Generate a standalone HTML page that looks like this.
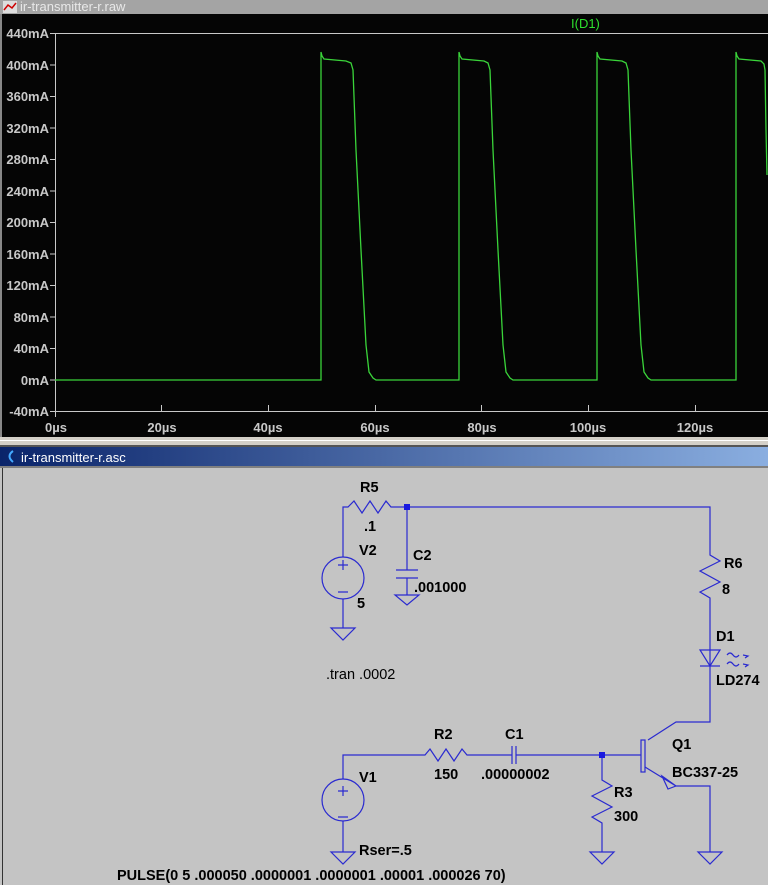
<!DOCTYPE html>
<html><head><meta charset="utf-8"><style>
html,body{margin:0;padding:0;width:768px;height:885px;overflow:hidden;background:#c4c4c4}
svg{display:block}
.ax{font-family:"Liberation Sans",sans-serif;font-size:13px;fill:#c8c8c8;font-weight:bold}
.t{font-family:"Liberation Sans",sans-serif;font-size:14.5px;fill:#000;font-weight:bold}
</style></head><body>
<svg width="768" height="885" viewBox="0 0 768 885" xmlns="http://www.w3.org/2000/svg">
<rect x="0" y="0" width="768" height="14" fill="#a4a4a4"/>
<rect x="3" y="1" width="14" height="12" fill="#ddd"/>
<path d="M4 10 L8 5 L12 8 L16 3" stroke="#c00" stroke-width="1.5" fill="none"/>
<text x="20" y="11" font-family="Liberation Sans,sans-serif" font-size="13" fill="#e8e8e8">ir-transmitter-r.raw</text>
<rect x="0" y="14" width="768" height="423" fill="#050505"/>
<rect x="0" y="14" width="2" height="423" fill="#888"/>
<g stroke="#c8c8c8" stroke-width="1" fill="none">
<line x1="50" y1="33.5" x2="768" y2="33.5"/>
<line x1="55.5" y1="33" x2="55.5" y2="411"/>
<line x1="55" y1="411.5" x2="768" y2="411.5"/>
<path d="M50 65h5M50 96.5h5M50 128h5M50 159.5h5M50 191h5M50 222.5h5M50 254h5M50 285.5h5M50 317h5M50 348.5h5M50 380h5M50 411.5h5"/>
<path d="M55.5 411v6M161.5 405v6M268.5 405v6M375.5 405v6M481.5 405v6M588.5 405v6M695.5 405v6"/>
</g>
<g class="ax" text-anchor="end">
<text x="49" y="38">440mA</text><text x="49" y="70">400mA</text><text x="49" y="101">360mA</text>
<text x="49" y="133">320mA</text><text x="49" y="164">280mA</text><text x="49" y="196">240mA</text>
<text x="49" y="227">200mA</text><text x="49" y="259">160mA</text><text x="49" y="290">120mA</text>
<text x="49" y="322">80mA</text><text x="49" y="353">40mA</text><text x="49" y="385">0mA</text>
<text x="49" y="416">-40mA</text>
</g>
<g class="ax" text-anchor="middle">
<text x="56" y="432">0µs</text><text x="162" y="432">20µs</text><text x="268" y="432">40µs</text>
<text x="375" y="432">60µs</text><text x="482" y="432">80µs</text><text x="588" y="432">100µs</text><text x="695" y="432">120µs</text>
</g>
<text x="571" y="28" font-family="Liberation Sans,sans-serif" font-size="13" fill="#2ee02e">I(D1)</text>
<path fill="none" stroke="#3ad43a" stroke-width="1.3" d="
M55 380 L321 380 L321 52 L322 56 L324 59 L346 61 L351 63 L353 70 L356 150 L361 250 L366 345 L369 372 L373 378 L376 380
L459 380 L459 52 L460 56 L462 59 L484 61 L488 63 L490 70 L493 150 L498 250 L503 345 L506 372 L510 378 L513 380
L597 380 L597 52 L598 56 L600 59 L622 61 L626 63 L628 70 L631 150 L636 250 L641 345 L644 372 L648 378 L651 380
L736 380 L736 52 L737 56 L739 59 L761 61 L764 64 L765 70 L766 130 L767 175"/>
<rect x="0" y="437" width="768" height="11" fill="#d4d0c8"/>
<rect x="0" y="440" width="768" height="1" fill="#fff"/>
<rect x="0" y="445" width="768" height="2" fill="#555"/>
<defs><linearGradient id="g" x1="0" x2="1"><stop offset="0" stop-color="#0a246a"/><stop offset="1" stop-color="#8aaee0"/></linearGradient></defs>
<rect x="0" y="447" width="768" height="19" fill="url(#g)"/>
<path d="M13 451 Q6 456 13 462" stroke="#4af" stroke-width="2" fill="none"/>
<text x="21" y="462" font-family="Liberation Sans,sans-serif" font-size="13" fill="#fff">ir-transmitter-r.asc</text>
<rect x="0" y="466" width="768" height="2" fill="#808080"/>
<rect x="2" y="468" width="1" height="417" fill="#333"/>
<g stroke="#2a2ad0" stroke-width="1.2" fill="none">
<path d="M343 557 V507 H348 L354 501 L362 513 L370 501 L378 513 L386 501 L391 507 H710 V555 L720 561 L700 571 L720 582 L700 592 L710 598 V720 H710 M710 650 V722 H676 L648 740"/>
<circle cx="343" cy="578" r="21"/>
<path d="M338 565h10M343 560v10M338 592h10"/>
<path d="M343 599 V628 M331 628 H355 L343 640 Z"/>
<path d="M407 507 V570 M396 570 H418 M396 578 H418 M407 578 V595 M395 595 H419 L407 605 Z"/>
<path d="M700 650 H720 L710 666 Z M700 666 H720"/>
<path d="M727 655 q3 -4 6 0 q3 4 6 0 M727 664 q3 -4 6 0 q3 4 6 0 M743 655 l5 1 -3 2 M743 664 l5 1 -3 2"/>
<rect x="641" y="740" width="4" height="32"/>
<path d="M602 755 H641 M645 767 L676 786 H710 V852 M662 776 L676 786 L668 789 Z"/>
<path d="M343 779 V755 H425 L430 749 L438 761 L446 749 L454 761 L462 749 L467 755 H512 M516 755 H602 M512 746 V764 M516 746 V764"/>
<circle cx="343" cy="800" r="21"/>
<path d="M338 791h10M343 786v10M338 817h10"/>
<path d="M343 821 V852 M331 852 H355 L343 864 Z"/>
<path d="M602 755 V780 L612 786 L592 796 L612 807 L592 817 L602 823 V852 M590 852 H614 L602 864 Z"/>
<path d="M698 852 H722 L710 864 Z"/>
</g>
<rect x="404" y="504" width="6" height="6" fill="#1a1ae0"/>
<rect x="599" y="752" width="6" height="6" fill="#1a1ae0"/>
<g class="t">
<text x="360" y="492">R5</text><text x="364" y="531">.1</text>
<text x="359" y="555">V2</text><text x="357" y="608">5</text>
<text x="413" y="560">C2</text><text x="414" y="592">.001000</text>
<text x="724" y="568">R6</text><text x="722" y="594">8</text>
<text x="716" y="641">D1</text><text x="716" y="685">LD274</text>
<text x="326" y="679" font-weight="normal">.tran .0002</text>
<text x="672" y="749">Q1</text><text x="672" y="777">BC337-25</text>
<text x="434" y="739">R2</text><text x="434" y="779">150</text>
<text x="505" y="739">C1</text><text x="481" y="779">.00000002</text>
<text x="359" y="782">V1</text>
<text x="614" y="797">R3</text><text x="614" y="821">300</text>
<text x="359" y="855">Rser=.5</text>
<text x="117" y="880">PULSE(0 5 .000050 .0000001 .0000001 .00001 .000026 70)</text>
</g>
</svg>
</body></html>
